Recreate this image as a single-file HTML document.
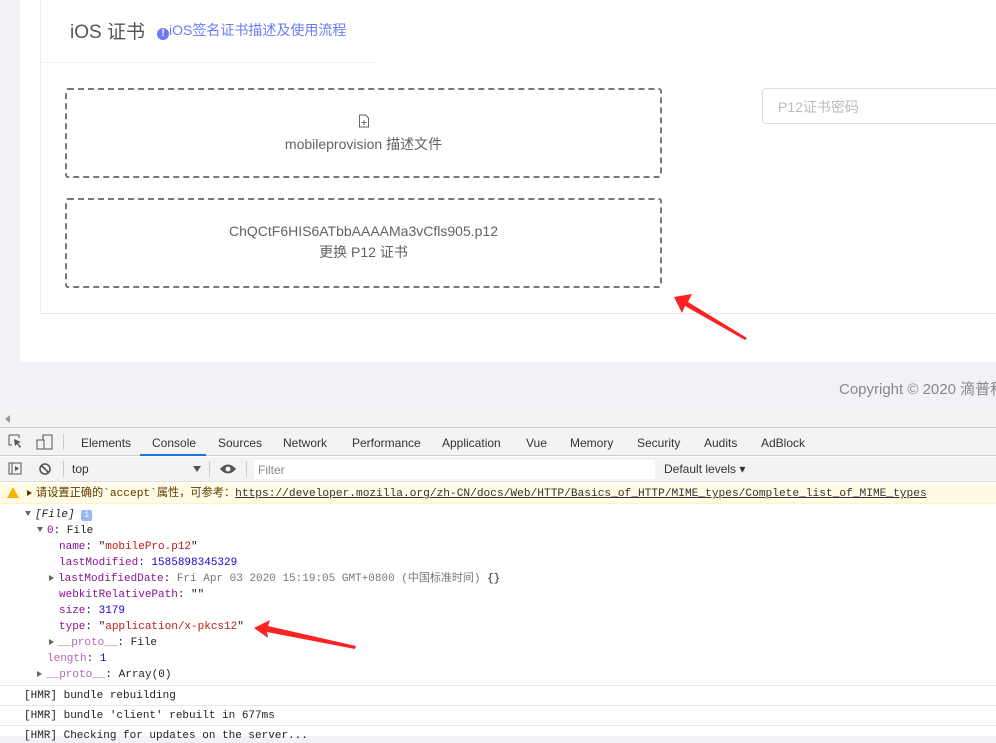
<!DOCTYPE html>
<html><head><meta charset="utf-8"><style>
*{margin:0;padding:0;box-sizing:border-box}
body{width:996px;height:736px;overflow:hidden;background:#f0f2f5;position:relative;font-family:"Liberation Sans","Noto Sans CJK SC",sans-serif}
.a{position:absolute;white-space:nowrap}
.box{position:absolute;border:2px dashed #777;border-radius:3px;text-align:center;color:#606266;font-size:14px}
.m{font-family:"Liberation Mono","Noto Sans CJK SC",monospace;font-size:11px;line-height:14px;color:#222}
.k{color:#881391}.s{color:#c41a16}.n{color:#1c00cf}.g{color:#777}
.tab{position:absolute;top:436px;font-size:12px;color:#333}
.tri{display:inline-block;width:0;height:0;border-left:5px solid #666;border-top:3.5px solid transparent;border-bottom:3.5px solid transparent;margin-right:4px}
.trd{display:inline-block;width:0;height:0;border-top:5px solid #666;border-left:3.5px solid transparent;border-right:3.5px solid transparent;margin-right:4px;vertical-align:1px}
</style></head><body>
<div class="a" style="left:20px;top:0;width:976px;height:362px;background:#fff"></div>
<div class="a" style="left:40px;top:0;width:1px;height:313px;background:#eef0f3"></div>
<div class="a" style="left:40px;top:62px;width:338px;height:1px;background:#eef0f3"></div>
<div class="a" style="left:40px;top:313px;width:956px;height:1px;background:#e6e8eb"></div>
<div class="a" style="left:70px;top:17px;font-size:19px;color:#555">iOS 证书</div>
<div class="a" style="left:157px;top:22px;font-size:14px;color:#6b7cf6;line-height:16px"><span style="display:inline-block;width:12px;height:12px;border-radius:50%;background:#6b7cf6;color:#fff;font-size:10px;text-align:center;line-height:12px;font-weight:bold;vertical-align:-1px">!</span>iOS签名证书描述及使用流程</div>
<div class="box" style="left:65px;top:88px;width:597px;height:90px;padding-top:24px">
<svg width="12" height="14" viewBox="0 0 12 14" style="display:block;margin:0 auto 6px"><path d="M1.5 1h6l3 3v9h-9z" fill="none" stroke="#666"/><path d="M6 6v5M3.5 8.5h5" stroke="#666"/></svg>mobileprovision 描述文件</div>
<div class="box" style="left:65px;top:198px;width:597px;height:90px;padding-top:21px;line-height:21px">ChQCtF6HIS6ATbbAAAAMa3vCfls905.p12<br>更换 P12 证书</div>
<div class="a" style="left:762px;top:88px;width:240px;height:36px;border:1px solid #dcdfe6;border-radius:4px;padding:8px 15px;font-size:14px;color:#bbb">P12证书密码</div>
<div class="a" style="left:839px;top:378px;font-size:15px;color:#888">Copyright © 2020 滴普科技</div>
<!-- devtools -->
<div class="a" style="left:0;top:410px;width:996px;height:326px;background:#fff"></div>
<div class="a" style="left:0;top:410px;width:996px;height:18px;background:#f3f3f3;border-bottom:1px solid #ccc"></div>
<div class="a" style="left:5px;top:415px;border-right:5px solid #999;border-top:4px solid transparent;border-bottom:4px solid transparent"></div>
<div class="a" style="left:0;top:428px;width:996px;height:28px;background:#f3f3f3;border-bottom:1px solid #ccc"></div>
<svg class="a" style="left:8px;top:434px" width="48" height="16"><path d="M1 1h10v3M1 1v10h3" fill="none" stroke="#555"/><path d="M6 5l7 3-3 1 3 4-1 1-3-4-2 2z" fill="#555"/><rect x="35" y="1" width="9" height="14" fill="none" stroke="#555"/><rect x="29" y="6" width="7" height="9" fill="#f3f3f3" stroke="#555"/></svg>
<div class="a" style="left:63px;top:434px;width:1px;height:16px;background:#ccc"></div>
<div class="tab" style="left:81px">Elements</div><div class="tab" style="left:152px">Console</div>
<div class="a" style="left:140px;top:454px;width:66px;height:2px;background:#1a73e8"></div>
<div class="tab" style="left:218px">Sources</div><div class="tab" style="left:283px">Network</div><div class="tab" style="left:352px">Performance</div><div class="tab" style="left:442px">Application</div><div class="tab" style="left:526px">Vue</div><div class="tab" style="left:570px">Memory</div><div class="tab" style="left:637px">Security</div><div class="tab" style="left:704px">Audits</div><div class="tab" style="left:761px">AdBlock</div>
<div class="a" style="left:0;top:457px;width:996px;height:25px;background:#f3f3f3;border-bottom:1px solid #ddd"></div>
<svg class="a" style="left:8px;top:462px" width="50" height="14"><rect x="1" y="1" width="12" height="11" fill="none" stroke="#555"/><path d="M4 1v11" stroke="#555"/><path d="M7 4l4 2.5-4 2.5z" fill="#555"/><circle cx="37" cy="7" r="5" fill="none" stroke="#555" stroke-width="1.6"/><path d="M33.5 3.5l7 7" stroke="#555" stroke-width="1.6"/></svg>
<div class="a" style="left:63px;top:461px;width:1px;height:16px;background:#ccc"></div>
<div class="a" style="left:72px;top:462px;font-size:12px;color:#333">top</div>
<div class="a" style="left:193px;top:466px;border-top:6px solid #555;border-left:4px solid transparent;border-right:4px solid transparent"></div>
<div class="a" style="left:209px;top:461px;width:1px;height:16px;background:#ccc"></div>
<svg class="a" style="left:219px;top:463px" width="18" height="12"><path d="M1 6q8-9 16 0q-8 9-16 0z" fill="#555"/><circle cx="9" cy="6" r="2.5" fill="#f3f3f3"/></svg>
<div class="a" style="left:246px;top:461px;width:1px;height:16px;background:#ccc"></div>
<div class="a" style="left:254px;top:460px;width:401px;height:19px;background:#fff;padding:3px 4px;font-size:12px;color:#888">Filter</div>
<div class="a" style="left:664px;top:462px;font-size:12px;color:#333">Default levels ▾</div>
<div class="a" style="left:0;top:483px;width:996px;height:21px;background:#fffbe5;border-bottom:1px solid #fff5c2"></div>
<div class="a" style="left:7px;top:487px;border-bottom:11px solid #f4b400;border-left:6px solid transparent;border-right:6px solid transparent"></div>
<div class="a m" style="left:27px;top:487px;color:#5c3b00;font-size:11.2px"><span class="tri" style="border-left-color:#5c3b00"></span>请设置正确的`accept`属性，可参考：<span style="text-decoration:underline;color:#333">https://developer.mozilla.org/zh-CN/docs/Web/HTTP/Basics_of_HTTP/MIME_types/Complete_list_of_MIME_types</span></div>
<div class="a m" style="left:25px;top:508px"><span class="trd"></span><i>[File]</i> <span style="display:inline-block;width:11px;height:11px;background:#9ab6f0;border-radius:2px;color:#fff;font-size:9px;text-align:center;line-height:11px">i</span></div>
<div class="a m" style="left:37px;top:524px"><span class="trd"></span><span class="k">0</span>: File</div>
<div class="a m" style="left:59px;top:540px"><span class="k">name</span>: "<span class="s">mobilePro.p12</span>"</div>
<div class="a m" style="left:59px;top:556px"><span class="k">lastModified</span>: <span class="n">1585898345329</span></div>
<div class="a m" style="left:49px;top:572px"><span class="tri"></span><span class="k">lastModifiedDate</span>: <span class="g">Fri Apr 03 2020 15:19:05 GMT+0800 (中国标准时间)</span> {}</div>
<div class="a m" style="left:59px;top:588px"><span class="k">webkitRelativePath</span>: ""</div>
<div class="a m" style="left:59px;top:604px"><span class="k">size</span>: <span class="n">3179</span></div>
<div class="a m" style="left:59px;top:620px"><span class="k">type</span>: "<span class="s">application/x-pkcs12</span>"</div>
<div class="a m" style="left:49px;top:636px"><span class="tri"></span><span class="k" style="opacity:.65">__proto__</span>: File</div>
<div class="a m" style="left:47px;top:652px"><span class="k" style="opacity:.65">length</span>: <span class="n">1</span></div>
<div class="a m" style="left:37px;top:668px"><span class="tri"></span><span class="k" style="opacity:.65">__proto__</span>: Array(0)</div>
<div class="a" style="left:0;top:685px;width:996px;height:1px;background:#e8e8e8"></div>
<div class="a m" style="left:24px;top:689px">[HMR] bundle rebuilding</div>
<div class="a" style="left:0;top:705px;width:996px;height:1px;background:#e8e8e8"></div>
<div class="a m" style="left:24px;top:709px">[HMR] bundle 'client' rebuilt in 677ms</div>
<div class="a" style="left:0;top:725px;width:996px;height:1px;background:#e8e8e8"></div>
<div class="a m" style="left:24px;top:729px">[HMR] Checking for updates on the server...</div>
<svg class="a" style="left:0;top:0" width="996" height="736"><polygon points="674,297 692,294 688,302 747,338 745,340 685,306 682,313" fill="#f22"/><polygon points="254,628 270,620 268,626 356,646 355,649 267,632 268,638" fill="#f22"/></svg>
</body></html>
